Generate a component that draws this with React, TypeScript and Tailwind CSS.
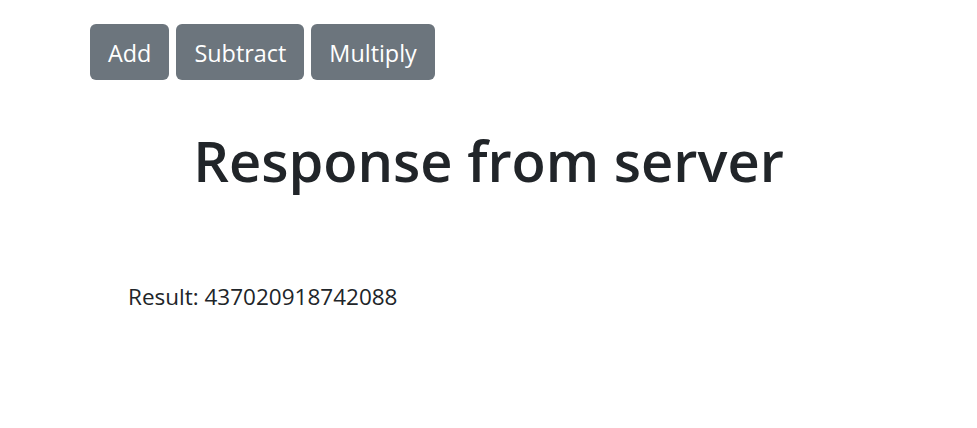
import React from "react";

const ops = ["Add", "Subtract", "Multiply"];

export default function App() {
  return (
    <div className="min-h-screen bg-white text-[#212529] font-['Open_Sans',sans-serif]">
      <div className="flex gap-[7px] pl-[90px] pt-[24px]">
        {ops.map((op) => (
          <button
            key={op}
            className="h-[56px] px-[18px] pt-[3px] rounded-[6px] bg-[#6c757d] text-white text-[23.4px] leading-none"
          >
            {op}
          </button>
        ))}
      </div>

      <h1 className="mt-[44px] text-center text-[56px] leading-[72px] font-semibold">
        Response from server
      </h1>

      <p className="mt-[86px] pl-[128px] text-[22.5px] leading-[30px]">
        Result: 437020918742088
      </p>
    </div>
  );
}
